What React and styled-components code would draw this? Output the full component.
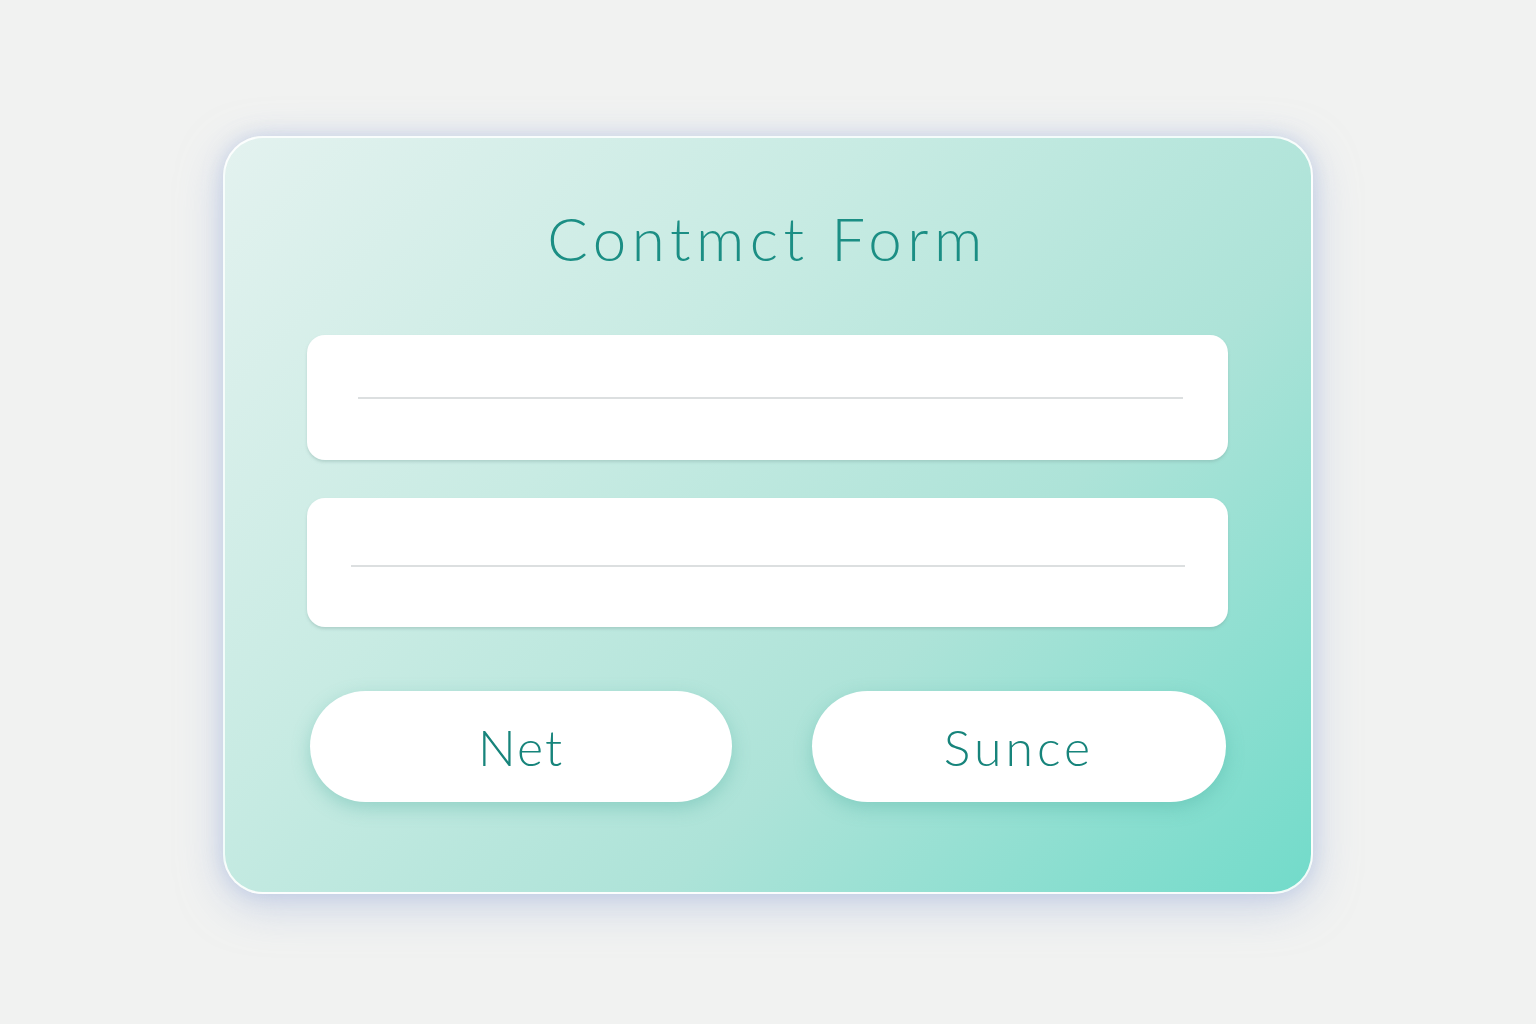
import React from "react";
import styled, { createGlobalStyle } from "styled-components";

const Global = createGlobalStyle`
  html, body { margin: 0; padding: 0; }
  body {
    background: #f1f2f1;
    font-family: Lato, "Open Sans", sans-serif;
    width: 1536px;
    height: 1024px;
    overflow: hidden;
  }
`;

const Page = styled.main`
  width: 1536px;
  height: 1024px;
  display: flex;
  justify-content: center;
  align-items: flex-start;
  padding-top: 136px;
  box-sizing: border-box;
  background: #f1f2f1;
`;

const Card = styled.section`
  width: 1090px;
  height: 758px;
  box-sizing: border-box;
  border-radius: 40px;
  border: 2px solid rgba(255, 255, 255, 0.9);
  background: linear-gradient(135deg, #e3f2ef 0%, #c8ebe3 35%, #ade3d8 65%, #72dbca 100%);
  box-shadow: 0 12px 44px rgba(170, 185, 220, 0.55), 0 0 18px rgba(185, 198, 228, 0.6);
  padding: 64px 83px 0 82px;
  display: flex;
  flex-direction: column;
`;

const Title = styled.h1`
  margin: 0;
  text-align: center;
  font-family: Lato, sans-serif;
  font-weight: 300;
  font-size: 60px;
  line-height: 72px;
  letter-spacing: 5.5px;
  color: #1b8e84;
`;

const Field = styled.div`
  height: ${(p) => p.$h}px;
  margin-top: ${(p) => p.$mt}px;
  background: #ffffff;
  border-radius: 18px;
  box-shadow: 0 2px 3px rgba(120, 160, 155, 0.35);
  display: flex;
  align-items: center;
  padding: 0 ${(p) => p.$pr}px 0 ${(p) => p.$pl}px;
  box-sizing: border-box;
`;

const Rule = styled.div`
  flex: 1;
  height: 2px;
  background: #dcdfe0;
  margin-top: ${(p) => p.$offset}px;
`;

const Buttons = styled.div`
  display: grid;
  grid-template-columns: 422px 414px;
  justify-content: space-between;
  margin-top: 64px;
  padding: 0 2px 0 3px;
`;

const Pill = styled.button`
  height: 111px;
  border: none;
  border-radius: 56px;
  background: #ffffff;
  box-shadow: 0 6px 18px rgba(70, 170, 155, 0.35);
  font-family: Lato, sans-serif;
  font-weight: 300;
  font-size: 50px;
  letter-spacing: ${(p) => p.$ls}px;
  color: #17847b;
  display: flex;
  align-items: center;
  justify-content: center;
  padding: 0;
  cursor: pointer;
`;

export default function App() {
  return (
    <>
      <Global />
      <Page>
        <Card>
          <Title>Contmct Form</Title>
          <Field $h={125} $mt={61} $pl={51} $pr={45}>
            <Rule $offset={0} />
          </Field>
          <Field $h={129} $mt={38} $pl={44} $pr={43}>
            <Rule $offset={6} />
          </Field>
          <Buttons>
            <Pill $ls={2}>Net</Pill>
            <Pill $ls={4}>Sunce</Pill>
          </Buttons>
        </Card>
      </Page>
    </>
  );
}
